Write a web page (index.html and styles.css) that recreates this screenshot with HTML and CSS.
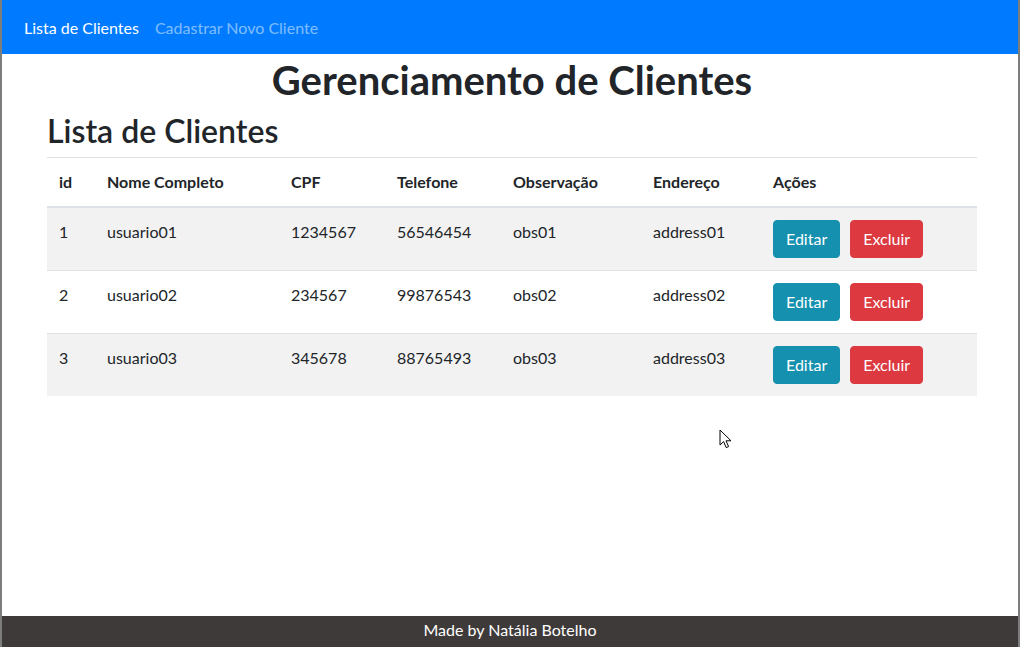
FILE: index.html
```html
<!DOCTYPE html>
<html lang="pt-BR">
<head>
<meta charset="utf-8">
<title>Gerenciamento de Clientes</title>
<link rel="stylesheet" href="styles.css">
</head>
<body>
<div class="frame">
  <nav class="navbar">
    <a class="nav-link active" href="#">Lista de Clientes</a>
    <a class="nav-link" href="#">Cadastrar Novo Cliente</a>
  </nav>
  <main class="container">
    <h1 class="title">Gerenciamento de Clientes</h1>
    <h2 class="subtitle">Lista de Clientes</h2>
    <table class="table">
      <thead>
        <tr>
          <th class="c-id">id</th>
          <th class="c-nome">Nome Completo</th>
          <th class="c-cpf">CPF</th>
          <th class="c-tel">Telefone</th>
          <th class="c-obs">Observação</th>
          <th class="c-end">Endereço</th>
          <th class="c-acoes">Ações</th>
        </tr>
      </thead>
      <tbody>
        <tr class="striped">
          <td>1</td><td>usuario01</td><td>1234567</td><td>56546454</td><td>obs01</td><td>address01</td>
          <td><div class="actions"><button class="btn btn-info">Editar</button><button class="btn btn-danger">Excluir</button></div></td>
        </tr>
        <tr>
          <td>2</td><td>usuario02</td><td>234567</td><td>99876543</td><td>obs02</td><td>address02</td>
          <td><div class="actions"><button class="btn btn-info">Editar</button><button class="btn btn-danger">Excluir</button></div></td>
        </tr>
        <tr class="striped">
          <td>3</td><td>usuario03</td><td>345678</td><td>88765493</td><td>obs03</td><td>address03</td>
          <td><div class="actions"><button class="btn btn-info">Editar</button><button class="btn btn-danger">Excluir</button></div></td>
        </tr>
      </tbody>
    </table>
  </main>
  <footer class="footer">Made by Natália Botelho</footer>
  <svg class="cursor" width="14" height="22" viewBox="0 0 14 22">
    <path d="M1 1 L1 16 L4.6 12.6 L7.2 18.6 L9.6 17.6 L7 11.8 L12 11.8 Z" fill="#fff" stroke="#000" stroke-width="1" stroke-linejoin="round"/>
  </svg>
</div>
</body>
</html>
```

FILE: styles.css
```css
* { box-sizing: border-box; }

html, body {
  margin: 0;
  padding: 0;
  background: #fff;
}

body {
  font-family: "Lato", "Open Sans", sans-serif;
  font-size: 16px;
  line-height: 24px;
  color: #212529;
}

.frame {
  position: relative;
  height: 647px;
  border-left: 2px solid #7d7d7d;
  border-right: 2px solid #7d7d7d;
  display: flex;
  flex-direction: column;
}

.navbar {
  background: #007bff;
  height: 54px;
  padding: 0 14px;
  display: flex;
  align-items: center;
  padding-top: 1px;
}

.nav-link {
  color: rgba(255, 255, 255, 0.5);
  text-decoration: none;
  padding: 8px 8px;
  line-height: 24px;
}

.nav-link.active {
  color: #fff;
}

.container {
  flex: 1;
  margin: 0 41px 0 45px;
}

.title {
  margin: 2px 0 8px;
  font-size: 40px;
  line-height: 48px;
  font-weight: 700;
  text-align: center;
}

.subtitle {
  margin: 0 0 7px;
  font-size: 32px;
  line-height: 38px;
  font-weight: 600;
}

.table {
  width: 100%;
  border-collapse: collapse;
  table-layout: fixed;
}

.table th,
.table td {
  padding: 12px;
  text-align: left;
  vertical-align: top;
  border-top: 1px solid #dee2e6;
}

.table th {
  font-weight: 700;
  border-bottom: 2px solid #dee2e6;
}

.table tbody tr:first-child td {
  border-top: 0;
}

.striped {
  background: #f2f2f2;
}

.c-id { width: 48px; }
.c-nome { width: 184px; }
.c-cpf { width: 106px; }
.c-tel { width: 116px; }
.c-obs { width: 140px; }
.c-end { width: 120px; }

.actions {
  display: flex;
  gap: 10px;
}

.btn {
  font-family: inherit;
  font-size: 16px;
  line-height: 24px;
  padding: 6px 12px;
  border: 1px solid transparent;
  border-radius: 4px;
  color: #fff;
  cursor: pointer;
}

.btn-info {
  background: #1590ae;
  border-color: #1590ae;
}

.btn-danger {
  background: #dc3a40;
  border-color: #dc3a40;
}

.footer {
  height: 31px;
  background: #3e3a39;
  color: #fff;
  text-align: center;
  line-height: 27px;
}

.cursor {
  position: absolute;
  left: 717px;
  top: 429px;
}
```
